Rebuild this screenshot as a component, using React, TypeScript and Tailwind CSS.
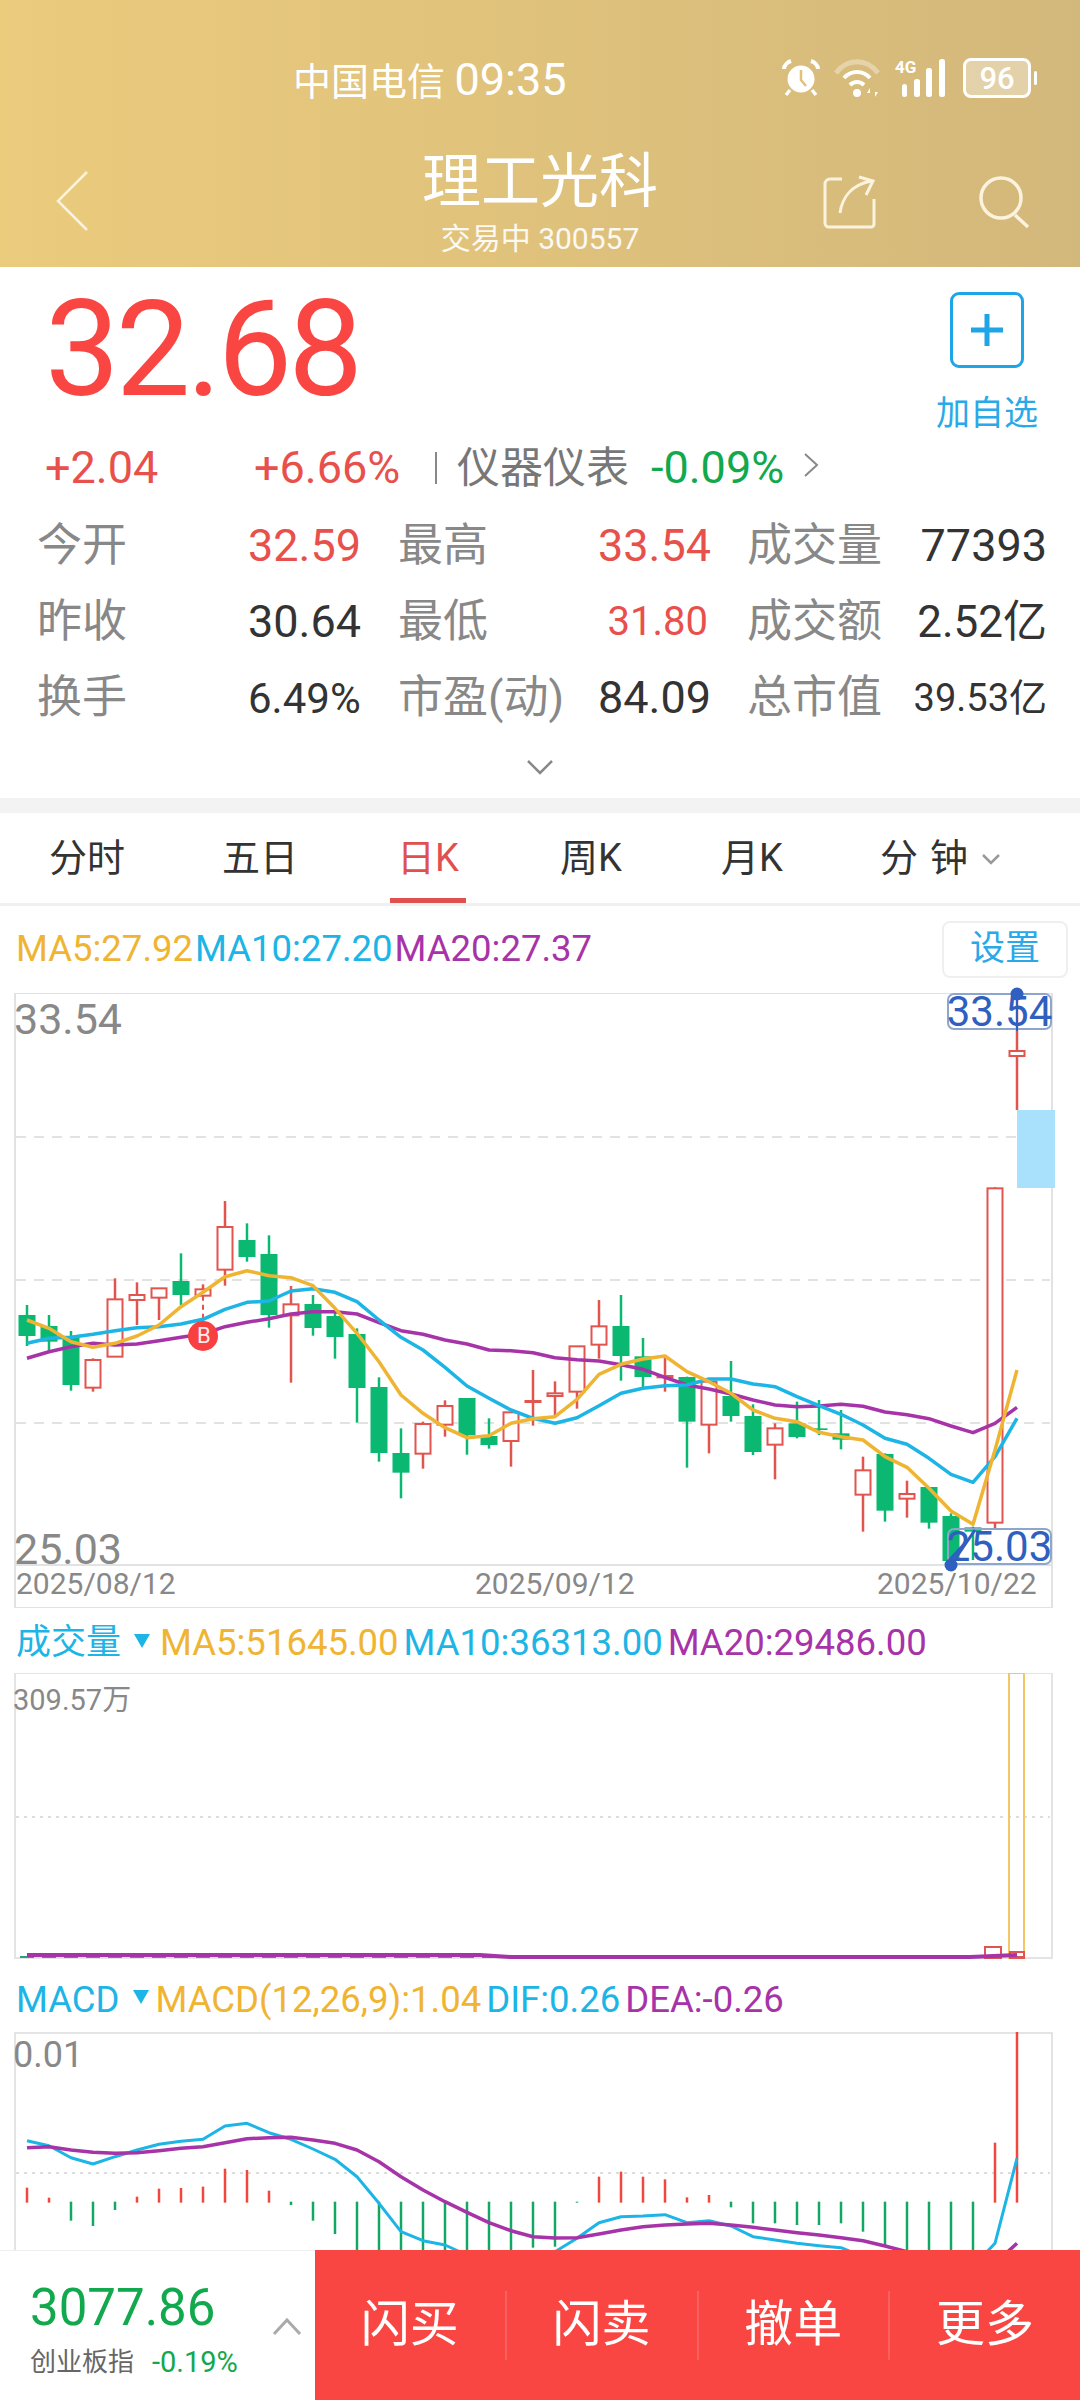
const GREEN = "#0BB871"
const RED = "#E2554F"
const ORANGE = "#F0B433"
const CYAN = "#1DB4E6"
const PURPLE = "#A733A9"

// x of candle i on the page
const cx = (i: number) => 27 + 22 * i
// y values below were read off the chart, 3 units per pixel from y=1130
const py = (z: number) => 1130 + z / 3

type Candle = [up: number, wickTop: number, bodyTop: number, bodyBot: number, wickBot: number]

const candles: Candle[] = [
  [0, 525, 555, 618, 648],
  [0, 555, 588, 635, 662],
  [0, 603, 620, 765, 782],
  [1, 685, 690, 773, 785],
  [1, 445, 508, 680, 680],
  [1, 457, 495, 510, 585],
  [1, 475, 475, 503, 570],
  [0, 370, 453, 495, 525],
  [1, 463, 478, 497, 500],
  [1, 213, 291, 419, 467],
  [0, 280, 330, 381, 395],
  [0, 316, 372, 555, 593],
  [1, 468, 523, 556, 758],
  [0, 495, 522, 594, 617],
  [0, 540, 558, 621, 686],
  [0, 595, 612, 774, 878],
  [0, 742, 771, 969, 995],
  [0, 895, 969, 1028, 1105],
  [1, 875, 882, 971, 1016],
  [1, 811, 828, 884, 920],
  [0, 804, 804, 916, 974],
  [0, 865, 918, 945, 956],
  [1, 845, 847, 933, 1010],
  [1, 720, 813, 816, 887],
  [1, 754, 790, 798, 862],
  [1, 648, 649, 785, 836],
  [1, 510, 589, 644, 686],
  [0, 495, 588, 678, 752],
  [0, 624, 679, 741, 775],
  [1, 678, 738, 742, 785],
  [0, 740, 741, 875, 1013],
  [1, 752, 755, 884, 970],
  [0, 693, 798, 858, 875],
  [0, 823, 858, 966, 975],
  [1, 880, 895, 944, 1048],
  [0, 815, 880, 921, 925],
  [0, 810, 895, 900, 915],
  [0, 840, 910, 929, 958],
  [1, 980, 1021, 1094, 1205],
  [0, 970, 972, 1142, 1175],
  [1, 1052, 1092, 1106, 1163],
  [0, 1071, 1071, 1178, 1196],
  [0, 1150, 1158, 1293, 1293],
  [0, 1190, 1192, 1205, 1290],
  [1, 172, 175, 1178, 1200],
  [1, -411, -237, -222, -60],
]

const ma5 = [570, 595, 635, 652, 640, 618, 585, 530, 487, 440, 422, 437, 443, 467, 535, 610, 695, 795, 850, 893, 923, 917, 880, 866, 860, 808, 733, 703, 687, 678, 725, 755, 790, 840, 865, 875, 907, 920, 930, 980, 1012, 1075, 1143, 1183, 960, 720]
const ma10 = [640, 625, 622, 613, 602, 593, 590, 582, 568, 538, 517, 513, 483, 476, 487, 515, 570, 622, 660, 712, 768, 805, 840, 865, 880, 863, 827, 790, 775, 767, 765, 747, 747, 762, 770, 800, 827, 853, 885, 925, 943, 985, 1033, 1057, 980, 865]
const ma20 = [685, 665, 650, 640, 645, 642, 632, 622, 612, 590, 577, 566, 552, 545, 545, 552, 578, 602, 613, 630, 642, 660, 662, 668, 683, 689, 693, 704, 718, 742, 765, 777, 792, 810, 825, 830, 828, 823, 829, 846, 854, 866, 888, 908, 880, 832]

// MACD bars: y the bar reaches, read at 3 units per pixel from y=1980
const macdBars = [623, 653, 722, 738, 690, 650, 626, 624, 620, 566, 570, 632, 675, 722, 762, 900, 900, 900, 900, 900, 900, 900, 900, 803, 800, 668, 590, 575, 590, 598, 652, 645, 682, 730, 730, 735, 735, 730, 755, 800, 810, 900, 900, 900, 488, 150]
const dif = [482, 497, 533, 552, 530, 510, 493, 484, 478, 438, 430, 458, 478, 507, 538, 590, 670, 755, 782, 795, 825, 860, 890, 870, 815, 775, 728, 710, 708, 704, 728, 722, 738, 770, 780, 790, 797, 803, 830, 860, 880, 900, 910, 860, 790, 535]
const dea = [503, 500, 510, 517, 520, 518, 512, 505, 500, 488, 476, 473, 472, 480, 490, 510, 545, 590, 630, 665, 697, 728, 752, 770, 774, 773, 762, 750, 740, 735, 732, 730, 735, 742, 750, 758, 765, 773, 782, 798, 815, 830, 845, 860, 850, 790]

const line = (vals: number[], toY: (z: number) => number) =>
  vals.map((v, i) => `${cx(i)},${toY(v).toFixed(1)}`).join(" ")

const macdY = (z: number) => 1980 + z / 3

const stats = [
  ["今开", "32.59", "text-[#E8504C] text-[45px]", "最高", "33.54", "text-[#E8504C] text-[45px]", "成交量", "77393", "text-[45px]"],
  ["昨收", "30.64", "text-[#333] text-[45px]", "最低", "31.80", "text-[#E8504C] text-[40px]", "成交额", "2.52亿", "text-[44px]"],
  ["换手", "6.49%", "text-[#333] text-[42px]", "市盈(动)", "84.09", "text-[#333] text-[45px]", "总市值", "39.53亿", "text-[38px]"],
]

const tabs = ["分时", "五日", "日K", "周K", "月K"]

function StatusIcons() {
  return (
    <div className="flex items-center">
      <svg width="40" height="40" viewBox="0 0 40 40" fill="none" className="mr-[12px]">
        <circle cx="20" cy="21" r="13.5" fill="#fff" />
        <path d="M20 12v10l5 6" stroke="#E0C27C" strokeWidth="2.5" />
        <path d="M3 11c0-4 4-7 7-8M37 11c0-4-4-7-7-8" stroke="#fff" strokeWidth="4" />
        <path d="M9 32l-4 5M31 32l4 5" stroke="#fff" strokeWidth="3.5" />
      </svg>
      <svg width="50" height="40" viewBox="0 0 50 40" fill="none" className="mr-[12px]">
        <path d="M3 15c11-15 31-15 42 0" stroke="#fff" strokeOpacity=".35" strokeWidth="5" />
        <path d="M11 20c7-8 19-8 26 0" stroke="#fff" strokeWidth="4" />
        <path d="M17 27c4-4 10-4 14 0" stroke="#fff" strokeWidth="4" />
        <circle cx="24" cy="35" r="4" fill="#fff" />
        <path d="M37 39v-9l-3 5h3M42 30v9l3-5h-3" fill="#fff" />
      </svg>
      <div className="relative w-[54px] h-[40px] mr-[14px]">
        <span className="absolute left-0 top-0 text-[17px] leading-[18px] font-bold text-white">4G</span>
        <svg width="54" height="40" viewBox="0 0 54 40" fill="#fff">
          <rect x="7" y="26" width="5" height="13" rx="2.5" />
          <rect x="19" y="21" width="6" height="18" rx="2.5" />
          <rect x="31" y="10" width="6" height="29" rx="2.5" />
          <rect x="44" y="1" width="6" height="38" rx="2.5" />
        </svg>
      </div>
      <div className="flex items-center">
        <div className="w-[68px] h-[40px] rounded-[8px] border-[3px] border-white bg-white/35 flex items-center justify-center text-white text-[31px] leading-none font-medium">
          96
        </div>
        <div className="w-[3px] h-[14px] bg-white rounded-full ml-[3px]" />
      </div>
    </div>
  )
}

function Header() {
  return (
    <div className="h-[267px] bg-gradient-to-r from-[#EBCB7C] to-[#D3B87B] text-white">
      <div className="h-[145px] pt-[58px] pl-[293px] pr-[43px] flex justify-between items-start">
        <span className="text-[38px] leading-[44px] whitespace-nowrap">
          中国电信 <span className="text-[45px]">09:35</span>
        </span>
        <StatusIcons />
      </div>
      <div className="relative flex flex-col items-center">
        <span className="text-[59px] leading-[74px]">理工光科</span>
        <span className="text-[30px] leading-[36px] mt-[2px] text-white/90">交易中 300557</span>
        <svg className="absolute left-[55px] top-[25px]" width="34" height="62" viewBox="0 0 34 62" fill="none" stroke="#FBF3DD" strokeWidth="2.5">
          <path d="M32 2L3 31l29 29" />
        </svg>
        <svg className="absolute left-[822px] top-[30px]" width="56" height="54" viewBox="0 0 56 54" fill="none" stroke="#FBF3DD" strokeWidth="3">
          <path d="M20 4H8a5 5 0 0 0-5 5v39a4 4 0 0 0 4 4h42a3 3 0 0 0 3-3V24" />
          <path d="M18 38c2-15 11-28 31-32M37 2l14 4-7 14" />
        </svg>
        <svg className="absolute left-[978px] top-[30px]" width="54" height="54" viewBox="0 0 54 54" fill="none" stroke="#FBF3DD" strokeWidth="3.5">
          <circle cx="23" cy="23" r="20" />
          <path d="M37 40l13 12" />
        </svg>
      </div>
    </div>
  )
}

function Quote() {
  return (
    <div className="relative h-[531px]">
      <div className="absolute left-[45px] top-[13px] text-[133px] leading-[140px] tracking-[-4px] text-[#FA4642]">32.68</div>
      <div className="absolute left-[935px] top-[25px] w-[104px] flex flex-col items-center">
        <div className="w-[74px] h-[76px] border-[3px] border-[#1DA5E8] rounded-[9px] flex items-center justify-center">
          <svg width="32" height="32" viewBox="0 0 32 32" fill="#1DA5E8">
            <rect x="13.5" y="0" width="5" height="32" />
            <rect x="0" y="13.5" width="32" height="5" />
          </svg>
        </div>
        <span className="text-[34px] leading-[40px] mt-[25px] whitespace-nowrap text-[#29A9E8]">加自选</span>
      </div>
      <div className="absolute left-0 top-[176px] flex items-center h-[50px] text-[45px] whitespace-nowrap">
        <span className="ml-[45px] w-[209px] text-[#E8504C]">+2.04</span>
        <span className="w-[181px] text-[#E8504C]">+6.66%</span>
        <span className="w-[2px] h-[32px] bg-[#888]" />
        <span className="ml-[20px] text-[#777] text-[43px]">仪器仪表</span>
        <span className="ml-[22px] text-[#12A84D]">-0.09%</span>
        <svg className="ml-[19px] mb-[6px]" width="17" height="26" viewBox="0 0 17 26" fill="none" stroke="#888" strokeWidth="2">
          <path d="M2 2l12 11L2 24" />
        </svg>
      </div>
      <div className="absolute left-[37px] top-[241px] flex flex-col">
        {stats.map((row) => (
          <div key={row[0]} className="grid grid-cols-[211px_150px_200px_110px_39px_150px_150px] h-[76px] items-center whitespace-nowrap">
            <span className="text-[#888] text-[45px]">{row[0]}</span>
            <span className={row[2]}>{row[1]}</span>
            <span className="text-[#888] text-[45px]">{row[3]}</span>
            <span className={`${row[5]} text-right`}>{row[4]}</span>
            <span />
            <span className="text-[#888] text-[45px]">{row[6]}</span>
            <span className={`${row[8]} text-[#333] text-right`}>{row[7]}</span>
          </div>
        ))}
      </div>
      <svg className="absolute left-[526px] top-[492px]" width="28" height="17" viewBox="0 0 28 17" fill="none" stroke="#888" strokeWidth="2.5">
        <path d="M2 2l12 12L26 2" />
      </svg>
    </div>
  )
}

function Tabs() {
  return (
    <>
      <div className="h-[15px] bg-[#F3F3F3]" />
      <div className="relative h-[93px] border-b-[3px] border-[#F0F0F0] flex items-center text-[38px] text-[#333]">
        {tabs.map((t, i) => (
          <span
            key={t}
            className={`absolute text-center w-[120px] ${t === "日K" ? "text-[#E0504F]" : ""} ${
              ["left-[27px]", "left-[200px]", "left-[368px]", "left-[531px]", "left-[692px]"][i]
            }`}
          >
            {t}
          </span>
        ))}
        <span className="absolute left-[880px] tracking-[12px]">分钟</span>
        <svg className="absolute left-[981px] top-[40px]" width="20" height="12" viewBox="0 0 20 12" fill="none" stroke="#999" strokeWidth="2.5">
          <path d="M2 2l8 8 8-8" />
        </svg>
        <div className="absolute left-[390px] bottom-0 w-[76px] h-[5px] bg-[#E0504F]" />
      </div>
    </>
  )
}

function MaRow() {
  return (
    <div className="h-[87px] pl-[16px] pr-[12px] flex items-center justify-between text-[36.5px] whitespace-nowrap">
      <div className="flex gap-[2px]">
        <span className="text-[#F0B433]">MA5:27.92</span>
        <span className="text-[#1DB4E6]">MA10:27.20</span>
        <span className="text-[#A733A9]">MA20:27.37</span>
      </div>
      <div className="w-[126px] h-[57px] rounded-[8px] border-2 border-[#EFEFEF] flex items-center justify-center text-[#29A9E8] text-[35px]">设置</div>
    </div>
  )
}

function CandleChart() {
  return (
    <div className="relative h-[615px]">
      <svg width="1080" height="615" viewBox="0 993 1080 615" fill="none" className="block">
        <path d="M15 993H1052M15 993V1608M1052 993V1608M15 1565H1052M15 1608H1052" stroke="#E2E2E2" strokeWidth="2" />
        {[1137, 1280, 1423].map((y) => (
          <line key={y} x1="16" x2="1050" y1={y} y2={y} stroke="#E2E2E2" strokeWidth="2" strokeDasharray="10 8" />
        ))}
        <rect x="1017" y="1110" width="38" height="78" fill="#A9E0FB" />
        {candles.map((c, i) => {
          const [up, wt, bt, bb, wb] = c
          const color = up ? RED : GREEN
          return (
            <g key={i}>
              <line x1={cx(i)} x2={cx(i)} y1={py(wt)} y2={py(wb)} stroke={color} strokeWidth="2.5" />
              {up ? (
                <rect x={cx(i) - 7.5} y={py(bt)} width="15" height={py(bb) - py(bt)} fill="#fff" stroke={color} strokeWidth="2" />
              ) : (
                <rect x={cx(i) - 8.5} y={py(bt)} width="17" height={py(bb) - py(bt)} fill={color} />
              )}
            </g>
          )
        })}
        <line x1="203" x2="203" y1={py(497)} y2={py(575)} stroke={RED} strokeWidth="2" strokeDasharray="5 4" />
        <polyline points={line(ma20, py)} stroke={PURPLE} strokeWidth="3.5" strokeLinejoin="round" />
        <polyline points={line(ma10, py)} stroke={CYAN} strokeWidth="3.5" strokeLinejoin="round" />
        <polyline points={line(ma5, py)} stroke={ORANGE} strokeWidth="3.5" strokeLinejoin="round" />
        <circle cx="203" cy="1336" r="15" fill="#F7403F" />
      </svg>
      <span className="absolute left-[197px] top-[331px] text-[22px] leading-[24px] text-white/90">B</span>
      <span className="absolute left-[14px] top-[9px] text-[43px] leading-[34px] text-[#888]">33.54</span>
      <span className="absolute left-[14px] top-[541px] text-[43px] leading-[30px] text-[#888]">25.03</span>
      <div className="absolute left-[947px] top-0 w-[105px] h-[37px] rounded-[7px] border-2 border-[#8FA6CC] flex items-center justify-center text-[42px] leading-none text-[#2F5FBF]">33.54</div>
      <div className="absolute left-[947px] top-[535px] w-[105px] h-[37px] rounded-[7px] border-2 border-[#8FA6CC] flex items-center justify-center text-[42px] leading-none text-[#2F5FBF]">25.03</div>
      <div className="absolute left-[16px] top-[575px] flex text-[30px] leading-[32px] text-[#888] whitespace-nowrap">
        <span className="w-[459px]">2025/08/12</span>
        <span className="w-[402px]">2025/09/12</span>
        <span>2025/10/22</span>
      </div>
      {/* high / low pointers sit on top of the price tags */}
      <svg width="1080" height="620" viewBox="0 985 1080 620" fill="none" className="absolute left-0 top-[-8px] pointer-events-none">
        <line x1="1017" x2="1017" y1="993" y2="1031" stroke="#2F5FBF" strokeWidth="2" />
        <circle cx="1017" cy="994" r="6.5" fill="#2F5FBF" />
        <path d="M951 1565L975 1530" stroke="#2F5FBF" strokeWidth="3" />
        <circle cx="951" cy="1565" r="6.5" fill="#2F5FBF" />
      </svg>
    </div>
  )
}

function Caret() {
  return (
    <svg width="16" height="14" viewBox="0 0 16 14" fill={CYAN} className="block">
      <path d="M0 0h16L8 14z" />
    </svg>
  )
}

function VolumeChart() {
  return (
    <>
      <div className="h-[65px] pl-[16px] pt-[6px] flex items-center text-[36.5px] whitespace-nowrap">
        <span className="text-[#1DB4E6] text-[35px]">成交量</span>
        <span className="ml-[13px] mr-[10px] mb-[6px]"><Caret /></span>
        <span className="text-[#F0B433]">MA5:51645.00</span>
        <span className="ml-[5px] text-[#1DB4E6]">MA10:36313.00</span>
        <span className="ml-[5px] text-[#A733A9]">MA20:29486.00</span>
      </div>
      <div className="relative h-[285px]">
        <svg width="1080" height="287" viewBox="0 1673 1080 287" fill="none" className="block">
          <rect x="15" y="1673" width="1037" height="285" stroke="#E4E4E4" strokeWidth="2" />
          <line x1="16" x2="1050" y1="1817" y2="1817" stroke="#DDD" strokeWidth="2" strokeDasharray="3 5" />
          {candles.map((c, i) => (
            <rect key={i} x={cx(i) - 7} y="1956" width="14" height="2" fill={c[0] ? RED : "#2E9E80"} />
          ))}
          <rect x="985" y="1947" width="16" height="11" stroke={RED} strokeWidth="2" />
          <rect x="1009" y="1673" width="15" height="285" stroke="#F3C766" strokeWidth="2" />
          <rect x="1010" y="1952" width="14" height="6" stroke={RED} strokeWidth="2" />
          <path d="M27 1955H480L510 1957H970L1017 1955" stroke={PURPLE} strokeWidth="4" />
        </svg>
        <span className="absolute left-[13px] top-[10px] text-[29px] leading-[34px] text-[#888] whitespace-nowrap">309.57万</span>
      </div>
    </>
  )
}

function MacdChart() {
  return (
    <>
      <div className="h-[74px] pl-[16px] pt-[10px] flex items-center text-[36.5px] whitespace-nowrap">
        <span className="text-[#1DB4E6]">MACD</span>
        <span className="ml-[13px] mr-[7px] mb-[6px]"><Caret /></span>
        <span className="text-[#F0B433]">MACD(12,26,9):1.04</span>
        <span className="ml-[5px] text-[#1DB4E6]">DIF:0.26</span>
        <span className="ml-[5px] text-[#A733A9]">DEA:-0.26</span>
      </div>
      <div className="relative h-[368px]">
        <svg width="1080" height="368" viewBox="0 2032 1080 368" fill="none" className="block">
          <path d="M15 2400V2033H1052V2400" stroke="#E4E4E4" strokeWidth="2" />
          <line x1="16" x2="1050" y1="2173" y2="2173" stroke="#DDD" strokeWidth="2" strokeDasharray="3 5" />
          {macdBars.map((z, i) => {
            const up = z < 665
            return (
              <line
                key={i}
                x1={cx(i)}
                x2={cx(i)}
                y1={up ? macdY(668) : macdY(665)}
                y2={macdY(z)}
                stroke={up ? "#F0483F" : "#12A864"}
                strokeWidth="2.5"
              />
            )
          })}
          <polyline points={line(dif, macdY)} stroke={CYAN} strokeWidth="3" strokeLinejoin="round" />
          <polyline points={line(dea, macdY)} stroke={PURPLE} strokeWidth="3.5" strokeLinejoin="round" />
        </svg>
        <span className="absolute left-[13px] top-[1px] text-[36px] leading-[44px] text-[#888]">0.01</span>
      </div>
    </>
  )
}

function Footer() {
  return (
    <div className="absolute left-0 bottom-0 w-[1080px] h-[150px] flex">
      <div className="relative w-[315px] bg-white border-t border-[#EEE]">
        <div className="absolute left-[30px] top-[27px] text-[51px] leading-[60px] text-[#12A84D]">3077.86</div>
        <div className="absolute left-[30px] top-[95px] flex items-center whitespace-nowrap text-[26px] leading-[32px]">
          <span className="text-[#666]">创业板指</span>
          <span className="ml-[18px] text-[#12A84D] text-[29px]">-0.19%</span>
        </div>
        <svg className="absolute left-[272px] top-[67px]" width="30" height="18" viewBox="0 0 30 18" fill="none" stroke="#AAA" strokeWidth="3">
          <path d="M2 16L15 2l13 14" />
        </svg>
      </div>
      <div className="flex-1 bg-[#FA4642] flex items-center text-white text-[49px]">
        {["闪买", "闪卖", "撤单", "更多"].map((t, i) => (
          <div key={t} className={`flex-1 h-[69px] flex items-center justify-center ${i < 3 ? "border-r-2 border-white/15" : ""}`}>
            {t}
          </div>
        ))}
      </div>
    </div>
  )
}

export default function App() {
  return (
    <div className="relative w-[1080px] h-[2400px] overflow-hidden bg-white font-['Roboto','Noto_Sans_CJK_SC',sans-serif]">
      <Header />
      <Quote />
      <Tabs />
      <MaRow />
      <CandleChart />
      <VolumeChart />
      <MacdChart />
      <Footer />
    </div>
  )
}
